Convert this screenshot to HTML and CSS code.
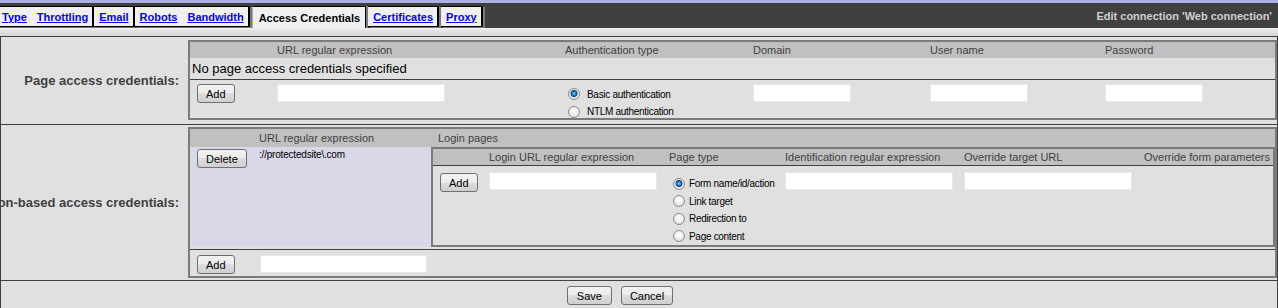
FILE: index.html
```html
<!DOCTYPE html>
<html lang="en">
<head>
    <meta charset="UTF-8">
    <meta name="viewport" content="width=device-width, initial-scale=1.0">
    <title>Edit connection</title>
    <link rel="stylesheet" href="styles.css">
</head>
<body>
    <div class="topline"></div>
    <div class="bar">
        <div class="tabs">
            <div class="tab first"><a href="#">Type</a><a href="#">Throttling</a></div>
            <div class="tab"><a href="#">Email</a></div>
            <div class="tab shadow"><a href="#">Robots</a><a href="#">Bandwidth</a></div>
            <div class="tab active">Access Credentials</div>
            <div class="tab shadow"><a href="#">Certificates</a></div>
            <div class="tab shadow"><a href="#">Proxy</a></div>
        </div>
        <div class="title">Edit connection 'Web connection'</div>
    </div>
    <div class="strip"></div>

    <form class="form">
        <div class="row row-page">
            <div class="label"><span>Page access credentials:</span></div>
            <div class="panel">
                <div class="cols page-cols head">
                    <span></span>
                    <span>URL regular expression</span>
                    <span>Authentication type</span>
                    <span>Domain</span>
                    <span>User name</span>
                    <span>Password</span>
                </div>
                <div class="empty">No page access credentials specified</div>
                <div class="cols page-cols add-row">
                    <div class="cell btn-cell"><button type="button">Add</button></div>
                    <div class="cell"><input type="text" class="wide"></div>
                    <div class="cell">
                        <div class="radios spaced">
                            <label><input type="radio" name="auth" checked><span>Basic authentication</span></label>
                            <label><input type="radio" name="auth"><span>NTLM authentication</span></label>
                        </div>
                    </div>
                    <div class="cell"><input type="text" class="short"></div>
                    <div class="cell"><input type="text" class="short"></div>
                    <div class="cell"><input type="text" class="short"></div>
                </div>
            </div>
        </div>

        <div class="row row-session">
            <div class="label"><span>Session-based access credentials:</span></div>
            <div class="panel">
                <div class="cols session-cols head tall">
                    <span></span>
                    <span>URL regular expression</span>
                    <span class="login-head">Login pages</span>
                </div>
                <div class="cols session-cols body">
                    <div class="entry btn-cell"><button type="button">Delete</button></div>
                    <div class="entry url">://protectedsite\.com</div>
                    <div class="nested">
                        <div class="cols login-cols head">
                            <span></span>
                            <span>Login URL regular expression</span>
                            <span>Page type</span>
                            <span>Identification regular expression</span>
                            <span>Override target URL</span>
                            <span>Override form parameters</span>
                        </div>
                        <div class="cols login-cols login-row">
                            <div class="cell btn-cell"><button type="button">Add</button></div>
                            <div class="cell"><input type="text" class="wide"></div>
                            <div class="cell">
                                <div class="radios tight">
                                    <label><input type="radio" name="ptype" checked><span>Form name/id/action</span></label>
                                    <label><input type="radio" name="ptype"><span>Link target</span></label>
                                    <label><input type="radio" name="ptype"><span>Redirection to</span></label>
                                    <label><input type="radio" name="ptype"><span>Page content</span></label>
                                </div>
                            </div>
                            <div class="cell"><input type="text" class="wide"></div>
                            <div class="cell"><input type="text" class="wide"></div>
                            <div class="cell"></div>
                        </div>
                    </div>
                </div>
                <div class="cols session-cols add-row low">
                    <div class="cell btn-cell"><button type="button">Add</button></div>
                    <div class="cell"><input type="text" class="wide pad"></div>
                    <div class="cell"></div>
                </div>
            </div>
        </div>

        <div class="actions">
            <button type="button" class="save">Save</button>
            <button type="button">Cancel</button>
        </div>
    </form>
</body>
</html>
```

FILE: styles.css
```css
*{
    margin: 0;
    padding: 0;
    box-sizing: border-box;
}
body{
    background-color: #e0e0e0;
    font-family: "Liberation Sans", Arial, sans-serif;
    font-size: 11px;
    width: 1278px;
    overflow: hidden;
}
.topline{
    height: 3px;
    background-color: #b0b0e4;
}
.bar{
    height: 25px;
    background-color: #404040;
    display: flex;
    justify-content: space-between;
}
.tabs{
    display: flex;
    align-items: flex-start;
    padding-top: 3px;
}
.tab{
    height: 21px;
    display: flex;
    align-items: center;
    gap: 10px;
    padding: 0 4px 0 5px;
    background-color: #f0f0f0;
    border-top: 1px solid #000;
    border-bottom: 1px solid #000;
    border-right: 2px solid #000;
    box-shadow: 0 1px 0 #7a7a7a;
    font-weight: bold;
}
.tab.first{
    padding-left: 2px;
    padding-right: 4px;
}
.tab.shadow{
    margin-right: 2px;
    box-shadow: 2px 1px 0 #7a7a7a;
}
.tab a{
    color: #0000ff;
    text-decoration: underline;
}
.tab.active{
    height: 22px;
    padding: 0 5px 0 6px;
    border-bottom: none;
    border-left: 1px solid #a8a8a8;
    border-right: 1px solid #000;
    box-shadow: 2px 0 0 #7a7a7a;
    margin-right: 2px;
    color: #000;
}
.title{
    align-self: center;
    padding-right: 6px;
    color: #d0d0d0;
    font-weight: bold;
}
.strip{
    height: 8px;
    background: linear-gradient(#ececec 0 2px, #e2e2e2 2px 5px, #d8d8d8 5px);
}
.form{
    border-top: 1px solid #404040;
    border-left: 1px solid #404040;
    border-right: 1px solid #404040;
}
.row{
    display: grid;
    grid-template-columns: 187px 1fr;
    border-bottom: 1px solid #404040;
}
.label{
    display: flex;
    justify-content: flex-end;
    align-items: center;
    overflow: hidden;
    white-space: nowrap;
    padding-right: 9px;
    font-size: 13px;
    font-weight: bold;
    color: #404040;
}
.panel{
    border: 2px solid #7a7a7a;
}
.row-page .panel{
    margin: 3px 0 4px;
}
.row-session .panel{
    margin: 2px 0 2px;
}
.cols{
    display: grid;
}
.page-cols{
    grid-template-columns: 87px 288px 188px 177px 175px 1fr;
}
.session-cols{
    grid-template-columns: 69px 172px 1fr;
}
.login-cols{
    grid-template-columns: 56px 180px 116px 179px 180px 1fr;
}
.head{
    height: 16px;
    line-height: 16px;
    background-color: #c0c0c0;
    color: #404040;
    white-space: nowrap;
}
.head.tall{
    height: 18px;
    line-height: 18px;
}
.login-head{
    padding-left: 7px;
}
.empty{
    height: 22px;
    line-height: 21px;
    padding-left: 2px;
    font-size: 13px;
    color: #000;
    border-bottom: 1px solid #404040;
}
.add-row{
    height: 38px;
}
.add-row .cell{
    padding-top: 4px;
}
.add-row.low{
    height: 27px;
    border-top: 1px solid #404040;
}
.add-row.low .cell{
    padding-top: 5px;
}
.btn-cell{
    padding-left: 7px;
}
button{
    font-family: "Liberation Sans", Arial, sans-serif;
    font-size: 11px;
    color: #000;
    height: 19px;
    padding: 0 8px;
    border: 1px solid #707070;
    border-radius: 3px;
    background: linear-gradient(#f2f2f2, #ebebeb 50%, #dddddd 50%, #cfcfcf);
}
input[type="text"]{
    height: 18px;
    border: 1px solid #e8e8e8;
    background-color: #fff;
    display: block;
}
.wide{
    width: 168px;
}
.short{
    width: 98px;
}
.pad{
    margin-left: 1px;
    width: 167px;
}
.radios{
    margin-top: 1.5px;
}
.radios label{
    display: flex;
    align-items: center;
    height: 17.5px;
    font-size: 10px;
    letter-spacing: -0.3px;
    color: #000;
    white-space: nowrap;
}
input[type="radio"]{
    appearance: none;
    width: 12px;
    height: 12px;
    border-radius: 50%;
    border: 1px solid #8d8d8d;
    background: radial-gradient(circle at 50% 40%, #fff 0, #f2f2f2 40%, #d2d2d2 100%);
    flex: none;
}
input[type="radio"]:checked{
    background: radial-gradient(circle at 50% 45%, #9edbff 0, #2b86c9 1.5px, #0e4a85 3.2px, #eaeaea 3.8px, #d0d0d0 100%);
}
.spaced input{
    margin-left: 3px;
}
.spaced span{
    margin-left: 7px;
}
.tight{
    margin-top: 3px;
}
.tight input{
    margin-left: 4px;
}
.tight span{
    margin-left: 4px;
}
.body{
    height: 98px;
    margin-bottom: 4px;
}
.entry{
    background-color: #d8d8e8;
}
.entry.btn-cell{
    margin-left: 1px;
    padding-left: 6px;
    padding-top: 2px;
}
.url{
    font-size: 10px;
    letter-spacing: -0.2px;
    line-height: 12px;
    padding-top: 2px;
    color: #000;
}
.nested{
    border: 2px solid #7a7a7a;
}
.nested .head{
    border-bottom: 1px solid #404040;
    height: 17px;
}
.login-row .cell{
    padding-top: 6px;
}
.login-row .btn-cell button{
    margin-top: 1px;
}
.actions{
    height: 27px;
    display: flex;
    justify-content: center;
    gap: 9px;
    padding: 5px 38px 0 0;
}
.save{
    padding: 0 9px;
}
```
